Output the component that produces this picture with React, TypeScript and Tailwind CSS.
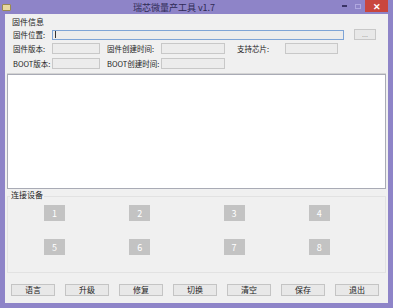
import React from 'react'

const font = { fontFamily: '"Noto Sans CJK SC", "Noto Sans", sans-serif' }

function Field({ w }: { w: string }) {
  return <div className={`h-[11px] border border-[#c8c8c8] bg-[#ececec] ${w}`} />
}

function Label({ text, w }: { text: string; w: string }) {
  return <div className={`text-[7.5px] leading-none text-[#222] whitespace-nowrap ${w}`}>{text}</div>
}

function Device({ n }: { n: number }) {
  return (
    <div className="w-[21px] h-[16px] bg-[#c3c3c3] flex items-center justify-center text-[9px] leading-none text-white">
      {n}
    </div>
  )
}

const buttons = ['语言', '升级', '修复', '切换', '清空', '保存', '退出']

export default function App() {
  return (
    <div className="w-[393px] h-[308px] bg-[#8e84c8] flex flex-col overflow-hidden" style={font}>
      {/* title bar */}
      <div className="h-[14px] flex items-center relative shrink-0">
        <div className="ml-[2px] w-[9px] h-[7px] bg-[#e8d8a0] border border-[#9a8a50] rounded-[1px]" />
        <div className="flex-1 text-center text-[9px] leading-none text-[#2e2a55]">瑞芯微量产工具 v1.7</div>
        <div className="flex items-start h-[14px] self-start mr-[5px]">
          <div className="w-[14px] h-[12px] flex items-center justify-center">
            <div className="w-[5px] h-[2px] bg-[#3a3366]" />
          </div>
          <div className="w-[14px] h-[12px] flex items-center justify-center">
            <div className="w-[6px] h-[5px] border border-[#b0a8e0]" />
          </div>
          <div className="w-[23px] h-[12px] bg-[#c9463d] flex items-center justify-center text-white text-[9px] leading-none font-bold">
            ✕
          </div>
        </div>
      </div>

      {/* client area */}
      <div className="mx-[5px] flex-1 mb-[5px] bg-[#f0f0f0] px-[2px] flex flex-col">
        {/* 固件信息 */}
        <div className="mt-[4px] h-[56px] border-b border-[#d4d4d4] flex flex-col">
          <div className="ml-[5px] h-[8px] text-[8px] leading-none text-[#222]">固件信息</div>
          <div className="mt-[3px] flex items-center h-[11px] ml-[6px]">
            <Label text="固件位置:" w="w-[39px]" />
            <div className="w-[292px] h-[10px] border border-[#7ea4d6] bg-[#ececec] flex items-center pl-[2px]">
              <div className="w-px h-[7px] bg-[#333]" />
            </div>
            <div className="ml-[10px] w-[22px] h-[11px] border border-[#c8c8c8] bg-[#e8e8e8] flex items-center justify-center text-[7px] leading-none text-[#999]">
              ...
            </div>
          </div>
          <div className="mt-[3px] flex items-center h-[11px] ml-[6px]">
            <Label text="固件版本:" w="w-[39px]" />
            <Field w="w-[48px]" />
            <Label text="固件创建时间:" w="ml-[7px] w-[54px]" />
            <Field w="w-[64px]" />
            <Label text="支持芯片:" w="ml-[12px] w-[48px]" />
            <Field w="w-[53px]" />
          </div>
          <div className="mt-[4px] flex items-center h-[11px] ml-[6px]">
            <Label text="BOOT版本:" w="w-[39px]" />
            <Field w="w-[48px]" />
            <Label text="BOOT创建时间:" w="ml-[7px] w-[54px]" />
            <Field w="w-[64px]" />
          </div>
        </div>

        {/* log */}
        <div className="h-[115px] border border-[#a9abb5] bg-white" />

        {/* 连接设备 */}
        <div className="mt-[2px] h-[82px] flex flex-col">
          <div className="relative z-10 self-start ml-[3px] px-[1px] h-[8px] bg-[#f0f0f0] text-[8px] leading-none text-[#222]">
            连接设备
          </div>
          <div className="flex-1 border border-[#e2e2e2] mt-[-3px] pt-[8px]">
            <div className="grid grid-cols-4 gap-y-[18px]">
              {[1, 2, 3, 4, 5, 6, 7, 8].map(n => (
                <div key={n} className={`flex ${n % 4 === 1 ? 'pl-[36px]' : n % 4 === 2 ? 'pl-[27px]' : n % 4 === 3 ? 'pl-[27px]' : 'pl-[18px]'}`}>
                  <Device n={n} />
                </div>
              ))}
            </div>
          </div>
        </div>

        {/* buttons */}
        <div className="mt-[11px] flex gap-[10px] pl-[4px]">
          {buttons.map(b => (
            <div
              key={b}
              className="w-[44px] h-[12px] border border-[#c4c4c4] bg-[#e8e8e8] flex items-center justify-center text-[8px] leading-none text-[#222]"
            >
              {b}
            </div>
          ))}
        </div>
      </div>
    </div>
  )
}
